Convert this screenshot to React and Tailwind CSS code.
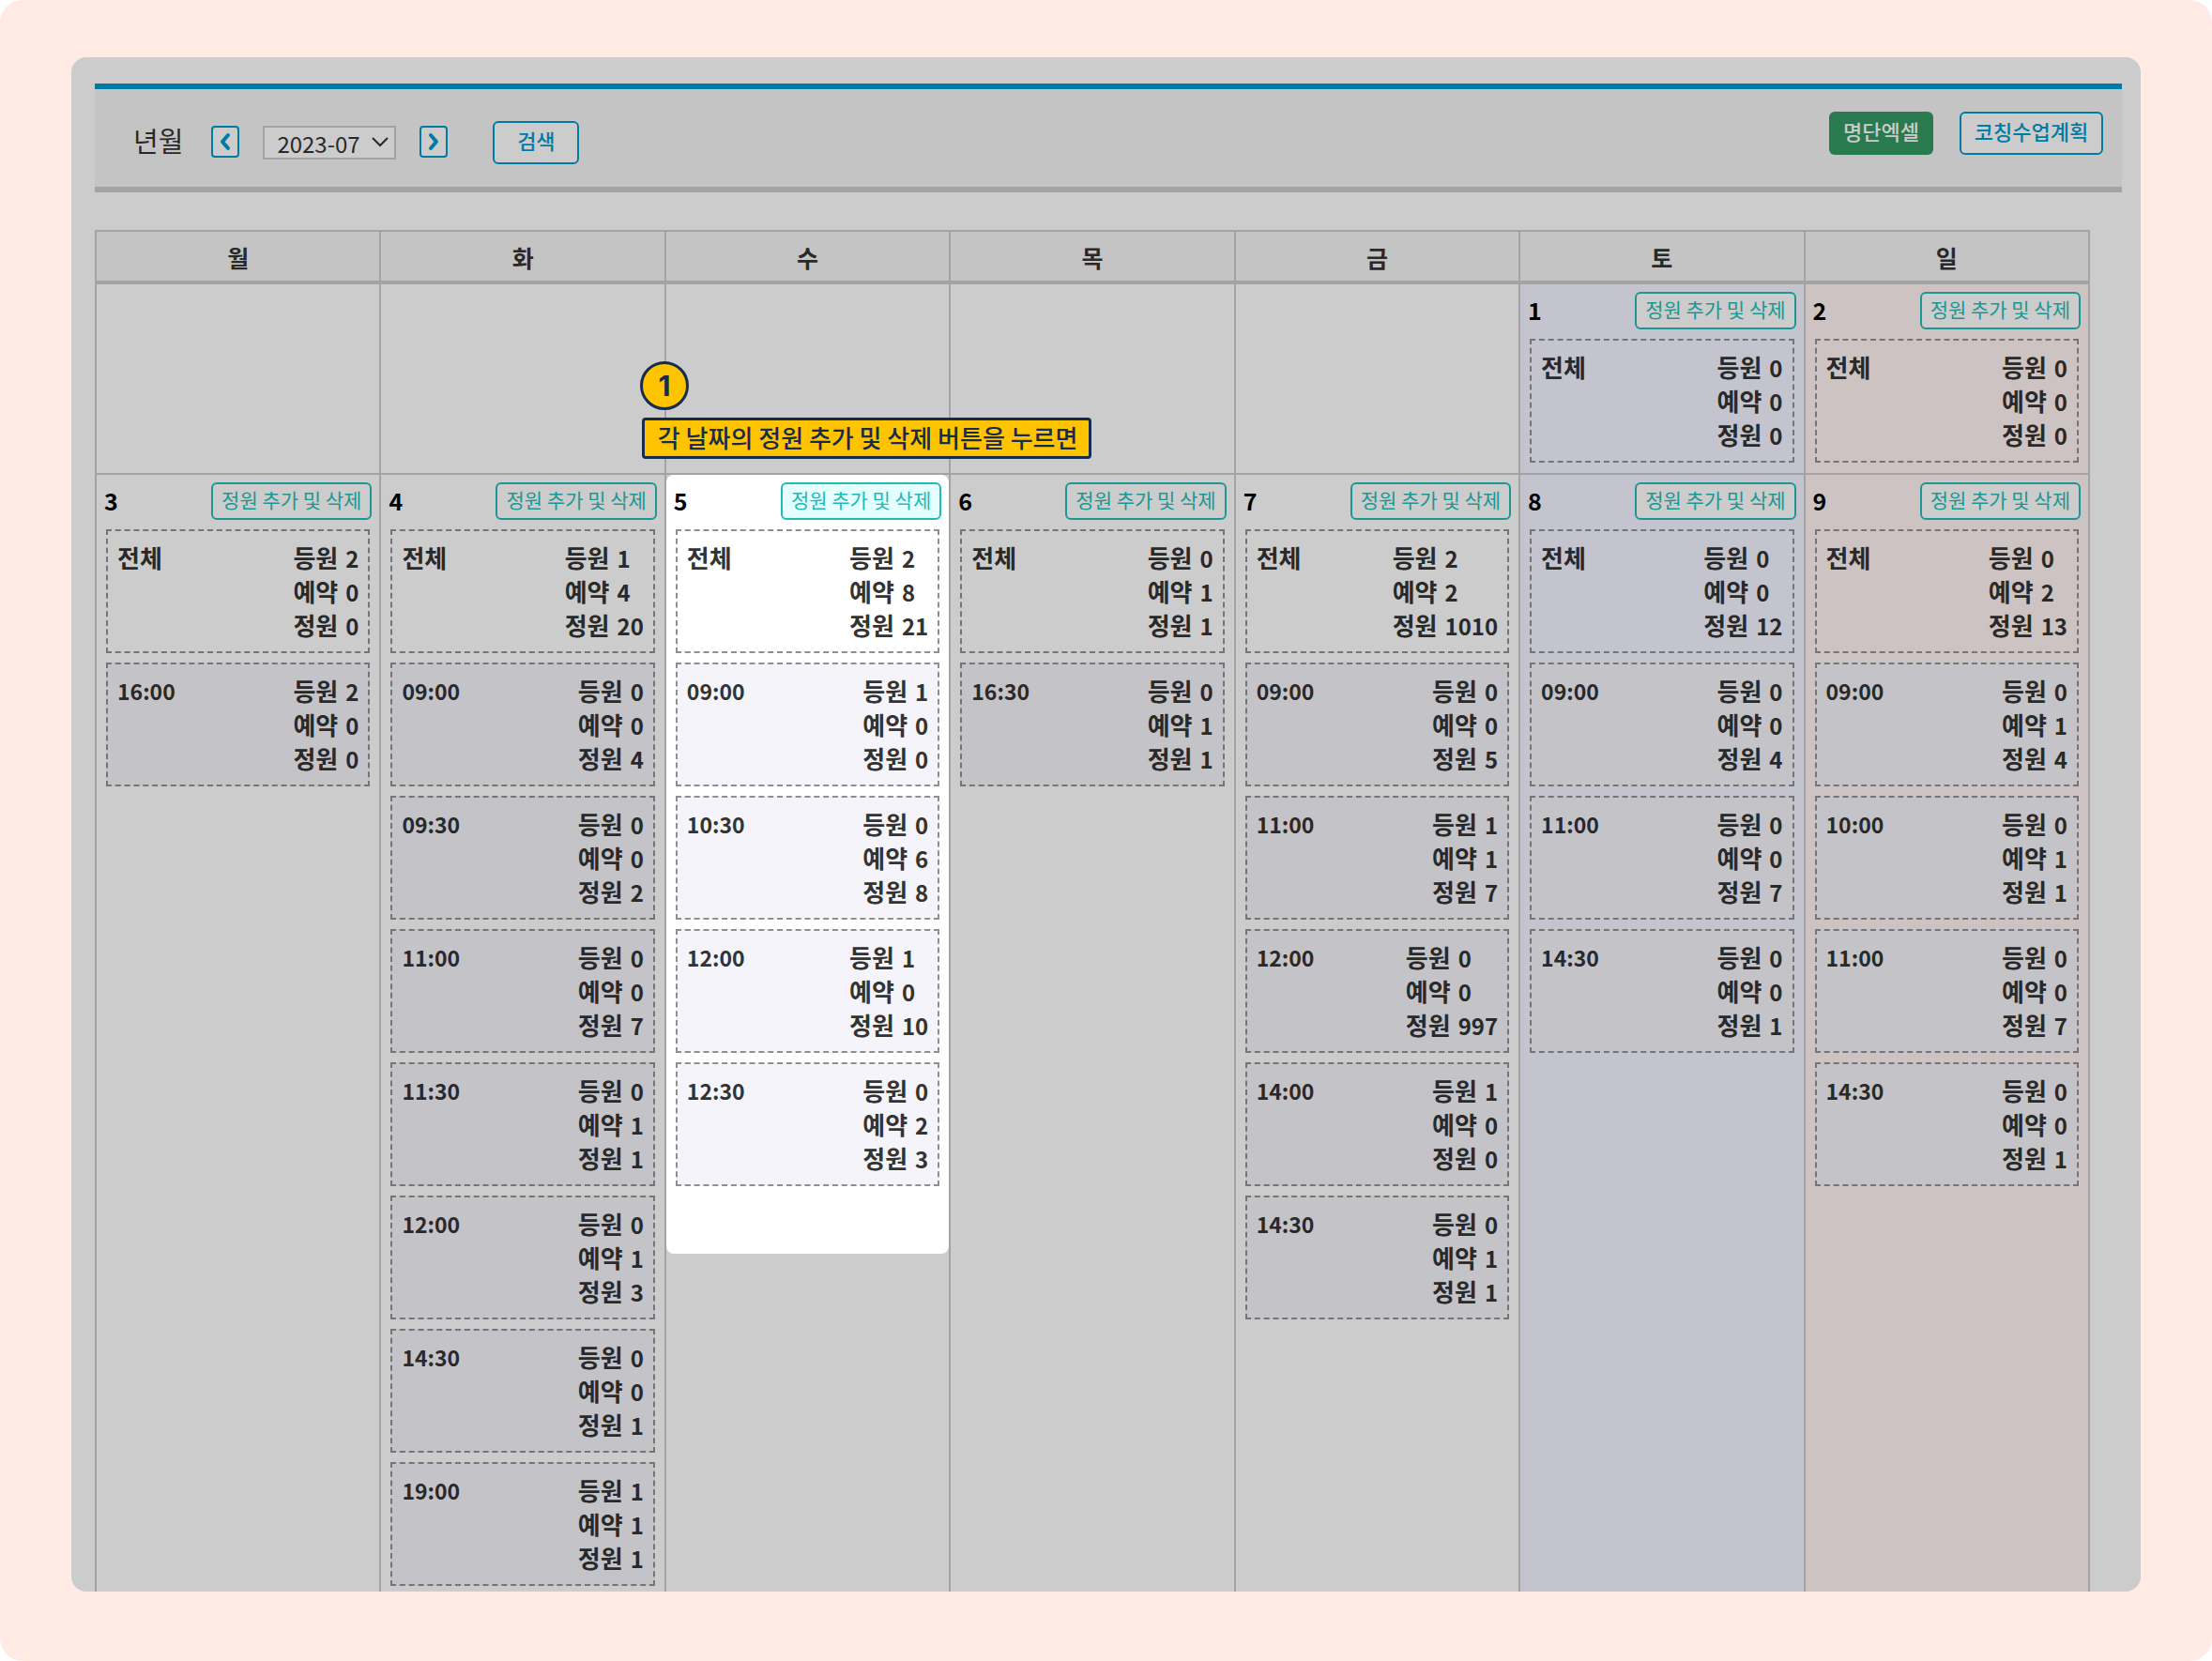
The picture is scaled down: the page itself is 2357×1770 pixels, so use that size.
const WEEKDAYS = ['월', '화', '수', '목', '금', '토', '일'];

const WEEKS = [
  [
    null,
    null,
    null,
    null,
    null,
    { day: 1, slots: [['전체', 0, 0, 0]] },
    { day: 2, slots: [['전체', 0, 0, 0]] },
  ],
  [
    { day: 3, slots: [['전체', 2, 0, 0], ['16:00', 2, 0, 0]] },
    {
      day: 4,
      slots: [
        ['전체', 1, 4, 20],
        ['09:00', 0, 0, 4],
        ['09:30', 0, 0, 2],
        ['11:00', 0, 0, 7],
        ['11:30', 0, 1, 1],
        ['12:00', 0, 1, 3],
        ['14:30', 0, 0, 1],
        ['19:00', 1, 1, 1],
      ],
    },
    {
      day: 5,
      active: true,
      slots: [
        ['전체', 2, 8, 21],
        ['09:00', 1, 0, 0],
        ['10:30', 0, 6, 8],
        ['12:00', 1, 0, 10],
        ['12:30', 0, 2, 3],
      ],
    },
    { day: 6, slots: [['전체', 0, 1, 1], ['16:30', 0, 1, 1]] },
    {
      day: 7,
      slots: [
        ['전체', 2, 2, 1010],
        ['09:00', 0, 0, 5],
        ['11:00', 1, 1, 7],
        ['12:00', 0, 0, 997],
        ['14:00', 1, 0, 0],
        ['14:30', 0, 1, 1],
      ],
    },
    {
      day: 8,
      slots: [
        ['전체', 0, 0, 12],
        ['09:00', 0, 0, 4],
        ['11:00', 0, 0, 7],
        ['14:30', 0, 0, 1],
      ],
    },
    {
      day: 9,
      slots: [
        ['전체', 0, 2, 13],
        ['09:00', 0, 1, 4],
        ['10:00', 0, 1, 1],
        ['11:00', 0, 0, 7],
        ['14:30', 0, 0, 1],
      ],
    },
  ],
];

const COLUMN_BG = ['', '', '', '', '', 'bg-[#c4c4ce]', 'bg-[#cdc3c3]'];

function Slot({ slot, active }) {
  const [name, attended, reserved, capacity] = slot;
  const total = name === '전체';
  const tone = active
    ? total
      ? 'border-[#8f8f8f] text-[#333]'
      : 'border-[#8f8f8f] bg-[#f5f4fa] text-[#333]'
    : total
      ? 'border-[#757575] text-[#292929]'
      : 'border-[#757575] bg-[#c4c3c8] text-[#292929]';
  return (
    <li className={`flex justify-between border-2 border-dashed px-[10px] py-[10px] text-2xl leading-9 font-bold ${tone}`}>
      <span className={total ? 'text-[26px] leading-9' : 'text-[23px] leading-9'}>{name}</span>
      <dl className="grid auto-rows-[36px] grid-cols-[auto_auto] items-baseline gap-x-2">
        <dt className="text-[26px] leading-9">등원</dt>
        <dd>{attended}</dd>
        <dt className="text-[26px] leading-9">예약</dt>
        <dd>{reserved}</dd>
        <dt className="text-[26px] leading-9">정원</dt>
        <dd>{capacity}</dd>
      </dl>
    </li>
  );
}

function Day({ data }) {
  const { day, slots, active } = data;
  return (
    <div className={active ? 'rounded-lg bg-white pt-2 pb-[72px]' : 'pt-2'}>
      <div className="flex h-10 items-center justify-between pr-2 pl-2">
        <strong className="pb-[2px] text-[25px] leading-9 font-bold text-black">{day}</strong>
        <button
          type="button"
          className={`h-10 rounded-md border-2 px-[9px] pb-1 text-[21px] leading-8 font-normal whitespace-nowrap ${
            active ? 'border-[#23b9b6] bg-[#e3ffff] text-[#23b9b6]' : 'border-[#1c9793] bg-[#ccc] text-[#1c9793]'
          }`}
        >
          정원 추가 및 삭제
        </button>
      </div>
      <ul className="mt-[10px] flex flex-col gap-[10px] px-[10px]">
        {slots.map((slot) => (
          <Slot key={slot[0]} slot={slot} active={active} />
        ))}
      </ul>
    </div>
  );
}

function Callout() {
  return (
    <div className="absolute bottom-full -left-7 z-10 mb-[17px] flex flex-col items-start gap-2 text-[#172b4d]">
      <span className="flex size-13 items-center justify-center rounded-full border-3 border-[#172b4d] bg-[#ffc400] font-[Inter,sans-serif] text-3xl font-bold">
        1
      </span>
      <p className="ml-[2px] flex h-11 w-[479px] items-center rounded border-3 border-[#172b4d] bg-[#ffc400] px-[14px] pb-[2px] text-[26px] leading-9 font-medium whitespace-nowrap">
        각 날짜의 정원 추가 및 삭제 버튼을 누르면
      </p>
    </div>
  );
}

function ArrowButton({ label, path }) {
  return (
    <button
      type="button"
      aria-label={label}
      className="flex h-[34px] w-[30px] items-center justify-center rounded border-2 border-[#007ba6] bg-[#ccc] text-[#007ba6]"
    >
      <svg
        width="14"
        height="20"
        viewBox="0 0 14 20"
        fill="none"
        stroke="currentColor"
        strokeWidth="4"
        strokeLinecap="round"
        strokeLinejoin="round"
        aria-hidden="true"
      >
        <path d={path} />
      </svg>
    </button>
  );
}

function SearchBar() {
  return (
    <form
      onSubmit={(event) => event.preventDefault()}
      className="flex items-start justify-between border-t-6 border-b-6 border-t-[#007ba6] border-b-[#a3a3a3] bg-[#c4c4c4] pt-6 pr-5 pb-6 pl-[41px]"
    >
      <div className="mt-[10px] flex items-center text-[#292929]">
        <label htmlFor="month" className="pb-[6px] text-[29px] leading-9">
          년월
        </label>
        <div className="ml-[30px] flex items-start gap-[25px]">
          <ArrowButton label="이전 달" path="M10 3 L4 10 L10 17" />
          <div className="relative">
            <select
              id="month"
              className="block h-9 w-[142px] appearance-none border-2 border-[#a3a3a3] bg-[#ccc] pt-[2px] pl-[13px] text-2xl leading-7"
            >
              <option>2023-07</option>
            </select>
            <svg
              className="pointer-events-none absolute top-3 right-2"
              width="18"
              height="12"
              viewBox="0 0 18 12"
              fill="none"
              stroke="currentColor"
              strokeWidth="2"
              aria-hidden="true"
            >
              <path d="M1 1 L9 9 L17 1" />
            </svg>
          </div>
          <ArrowButton label="다음 달" path="M4 3 L10 10 L4 17" />
        </div>
        <button
          type="submit"
          className="ml-12 h-[46px] w-[92px] rounded-md border-2 border-[#007ba6] bg-[#ccc] pb-[6px] text-[22px] leading-8 font-medium text-[#007ba6]"
        >
          검색
        </button>
      </div>
      <div className="flex gap-7">
        <button
          type="button"
          className="h-[46px] w-[111px] rounded-md bg-[#2a7a50] pb-[6px] text-[22px] leading-8 font-medium text-[#ccc]"
        >
          명단엑셀
        </button>
        <button
          type="button"
          className="h-[46px] w-[153px] rounded-md border-2 border-[#007ba6] bg-[#ccc] pb-[6px] text-[22px] leading-8 font-medium text-[#007ba6]"
        >
          코칭수업계획
        </button>
      </div>
    </form>
  );
}

export default function App() {
  return (
    <div className="rounded-3xl bg-[#ffebe4] px-[76px] pt-[61px] pb-[74px] font-['Noto_Sans_CJK_KR',sans-serif]">
      <main className="overflow-hidden rounded-2xl bg-[#ccc] pt-7 pr-5 pl-[25px]">
        <SearchBar />
        <div className="mt-10 pr-[34px]">
          <table className="w-full table-fixed border-separate border-spacing-0 border-t-2 border-l-2 border-[#a3a3a3]">
            <thead>
              <tr>
                {WEEKDAYS.map((name) => (
                  <th
                    key={name}
                    scope="col"
                    className="h-14 border-r-2 border-b-4 border-[#a3a3a3] bg-[#c4c4c4] pt-[2px] text-[25px] leading-9 font-bold text-[#292929]"
                  >
                    {name}
                  </th>
                ))}
              </tr>
            </thead>
            <tbody>
              {WEEKS.map((week, row) => (
                <tr key={row}>
                  {week.map((data, column) => (
                    <td
                      key={column}
                      className={`relative border-r-2 border-[#a3a3a3] px-0 pt-0 align-top ${COLUMN_BG[column]} ${
                        row === 0 ? 'border-b-2 pb-[11px]' : 'pb-[6px]'
                      }`}
                    >
                      {data && <Day data={data} />}
                      {data && data.active && <Callout />}
                    </td>
                  ))}
                </tr>
              ))}
            </tbody>
          </table>
        </div>
      </main>
    </div>
  );
}
